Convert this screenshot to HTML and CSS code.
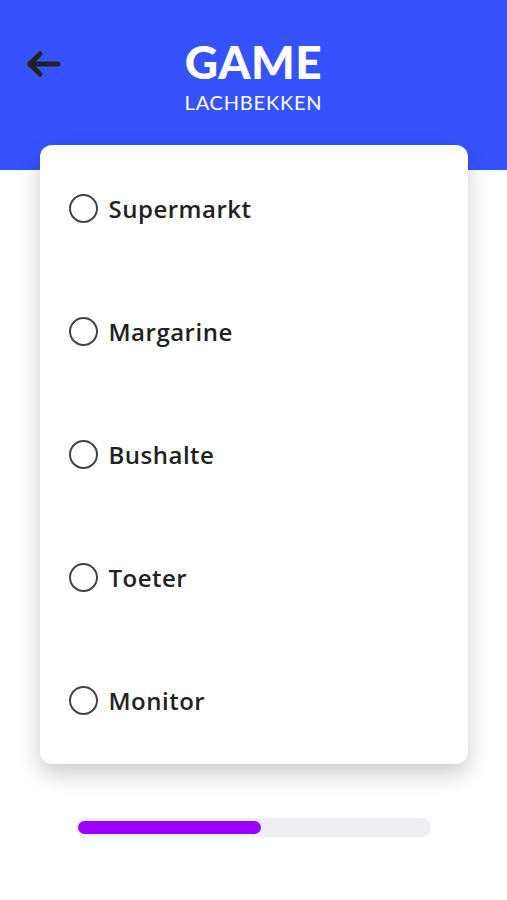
FILE: index.html
```html
<!DOCTYPE html>
<html lang="nl">
<head>
<meta charset="utf-8">
<link rel="stylesheet" href="styles.css">
</head>
<body>
<header class="topbar">
  <button class="back" aria-label="Terug">
    <svg width="36" height="28" viewBox="0 0 36 28"><path d="M33 14H5M15 4L4.5 14L15 24" fill="none" stroke="#222" stroke-width="5" stroke-linecap="round" stroke-linejoin="round"/></svg>
  </button>
  <div class="titles">
    <h1 class="title">GAME</h1>
    <div class="subtitle">LACHBEKKEN</div>
  </div>
</header>
<main class="content">
  <ul class="card">
    <li class="option"><span class="radio"></span><span class="label">Supermarkt</span></li>
    <li class="option"><span class="radio"></span><span class="label">Margarine</span></li>
    <li class="option"><span class="radio"></span><span class="label">Bushalte</span></li>
    <li class="option"><span class="radio"></span><span class="label">Toeter</span></li>
    <li class="option"><span class="radio"></span><span class="label">Monitor</span></li>
  </ul>
  <div class="progress"><div class="progress-fill" style="width:52%"></div></div>
</main>
</body>
</html>
```
FILE: styles.css
```css
* { box-sizing: border-box; }
html, body { margin: 0; padding: 0; background: #fff; }
body { font-family: Lato, "Noto Sans", sans-serif; color: #222; }

.topbar {
  height: 170px;
  background: #3652fd;
  position: relative;
  display: flex;
  justify-content: center;
}
.back {
  position: absolute;
  left: 25px;
  top: 50px;
  background: none;
  border: 0;
  padding: 0;
  line-height: 0;
}
.titles {
  display: flex;
  flex-direction: column;
  align-items: center;
  padding-top: 37px;
}
.title {
  margin: 0;
  font-family: Lato, sans-serif;
  font-weight: 900;
  font-size: 46px;
  line-height: 50px;
  color: #fff;
  letter-spacing: 0.5px;
}
.subtitle {
  font-family: Lato, sans-serif;
  font-weight: 400;
  font-size: 20px;
  line-height: 22px;
  letter-spacing: 0.8px;
  color: #fff;
  margin-top: 4px;
}

.content {
  display: flex;
  flex-direction: column;
  align-items: center;
}
.card {
  list-style: none;
  margin: -25px 0 0;
  padding: 2px 0;
  width: 428px;
  background: #fff;
  border-radius: 12px;
  box-shadow: 0 10px 22px rgba(0,0,0,0.2);
  position: relative;
}
.option {
  height: 123px;
  display: flex;
  align-items: center;
  padding-left: 29px;
  gap: 11px;
}
.radio {
  width: 29px;
  height: 29px;
  border: 2.5px solid #444;
  border-radius: 50%;
  flex: none;
}
.label {
  font-family: "Open Sans", sans-serif;
  font-weight: 600;
  font-size: 24px;
  line-height: 28px;
  letter-spacing: 0.5px;
  color: #222;
}
.progress {
  margin-top: 54px;
  width: 355px;
  height: 19px;
  background: #efeff3;
  border-radius: 10px;
  padding: 3px 2px;
}
.progress-fill {
  height: 13px;
  background: #9900ff;
  border-radius: 7px;
}
```
